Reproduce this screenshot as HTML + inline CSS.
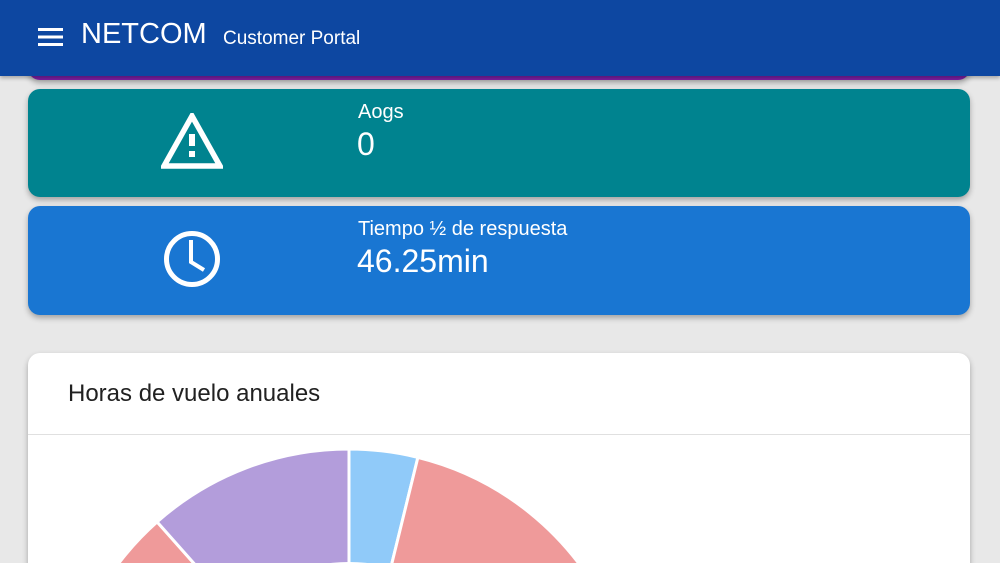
<!DOCTYPE html>
<html><head><meta charset="utf-8"><style>
html,body{margin:0;width:1000px;height:563px;overflow:hidden}
body{background:#e8e8e8;font-family:"Liberation Sans",sans-serif;position:relative}
.hdr{position:absolute;left:0;top:0;width:1000px;height:76px;background:#0d47a1;box-shadow:0 2px 4px rgba(0,0,0,.3);z-index:5;color:#fff}
.card{position:absolute;left:28px;width:942px;border-radius:12px;box-shadow:0 3px 6px rgba(0,0,0,.3);color:#fff}
.lbl{position:absolute;left:330px;font-size:20px}
.val{position:absolute;left:329px;font-size:32px}
</style></head><body>
<div class="hdr">
<svg style="position:absolute;left:38px;top:28px" width="25" height="18"><rect y="0" width="25" height="3" fill="#fff"/><rect y="7.5" width="25" height="3" fill="#fff"/><rect y="15" width="25" height="3" fill="#fff"/></svg>
<div style="position:absolute;left:81px;top:18px;font-size:29px">NETCOM</div>
<div style="position:absolute;left:223px;top:28px;font-size:19px">Customer Portal</div>
</div>
<div class="card" style="top:20px;height:60px;background:#7b1fa2"></div>
<div class="card" style="top:89px;height:108px;background:#00838f">
<svg style="position:absolute;left:133px;top:24px" width="62" height="56" viewBox="0 0 62 56"><path d="M31 3 L59 53 L3 53 Z" fill="none" stroke="#fff" stroke-width="5.5" stroke-linejoin="miter"/><rect x="28" y="21" width="6" height="12" fill="#fff"/><rect x="28" y="38" width="6" height="6" fill="#fff"/></svg>
<div class="lbl" style="top:12px">Aogs</div>
<div class="val" style="top:37px">0</div>
</div>
<div class="card" style="top:206px;height:109px;background:#1976d2">
<svg style="position:absolute;left:134px;top:22px" width="60" height="60" viewBox="0 0 60 60"><circle cx="30" cy="31" r="25.5" fill="none" stroke="#fff" stroke-width="5"/><path d="M29 12 V34 L42 42" fill="none" stroke="#fff" stroke-width="4"/></svg>
<div class="lbl" style="top:12px">Tiempo ½ de respuesta</div>
<div class="val" style="top:37px">46.25min</div>
</div>
<div class="card" style="top:353px;height:240px;background:#fff;color:#212121">
<div style="position:absolute;left:40px;top:27px;font-size:24px">Horas de vuelo anuales</div>
<div style="position:absolute;left:0;top:81px;width:942px;height:1px;background:#e0e0e0"></div>
</div>
<svg style="position:absolute;left:0;top:0" width="1000" height="563">
<g stroke="#fff" stroke-width="3">
<path d="M349 738 L349 449 A289 289 0 0 1 417.9 457.4 Z" fill="#90caf9"/>
<path d="M349 738 L417.9 457.4 A289 289 0 0 1 599 882 Z" fill="#ef9a9a"/>
<path d="M349 738 L60 738 A289 289 0 0 1 157.1 521.9 Z" fill="#ef9a9a"/>
<path d="M349 738 L157.1 521.9 A289 289 0 0 1 349 449 Z" fill="#b39ddb"/>
</g>
<circle cx="349" cy="738" r="176" fill="#fff"/>
</svg>
</body></html>
